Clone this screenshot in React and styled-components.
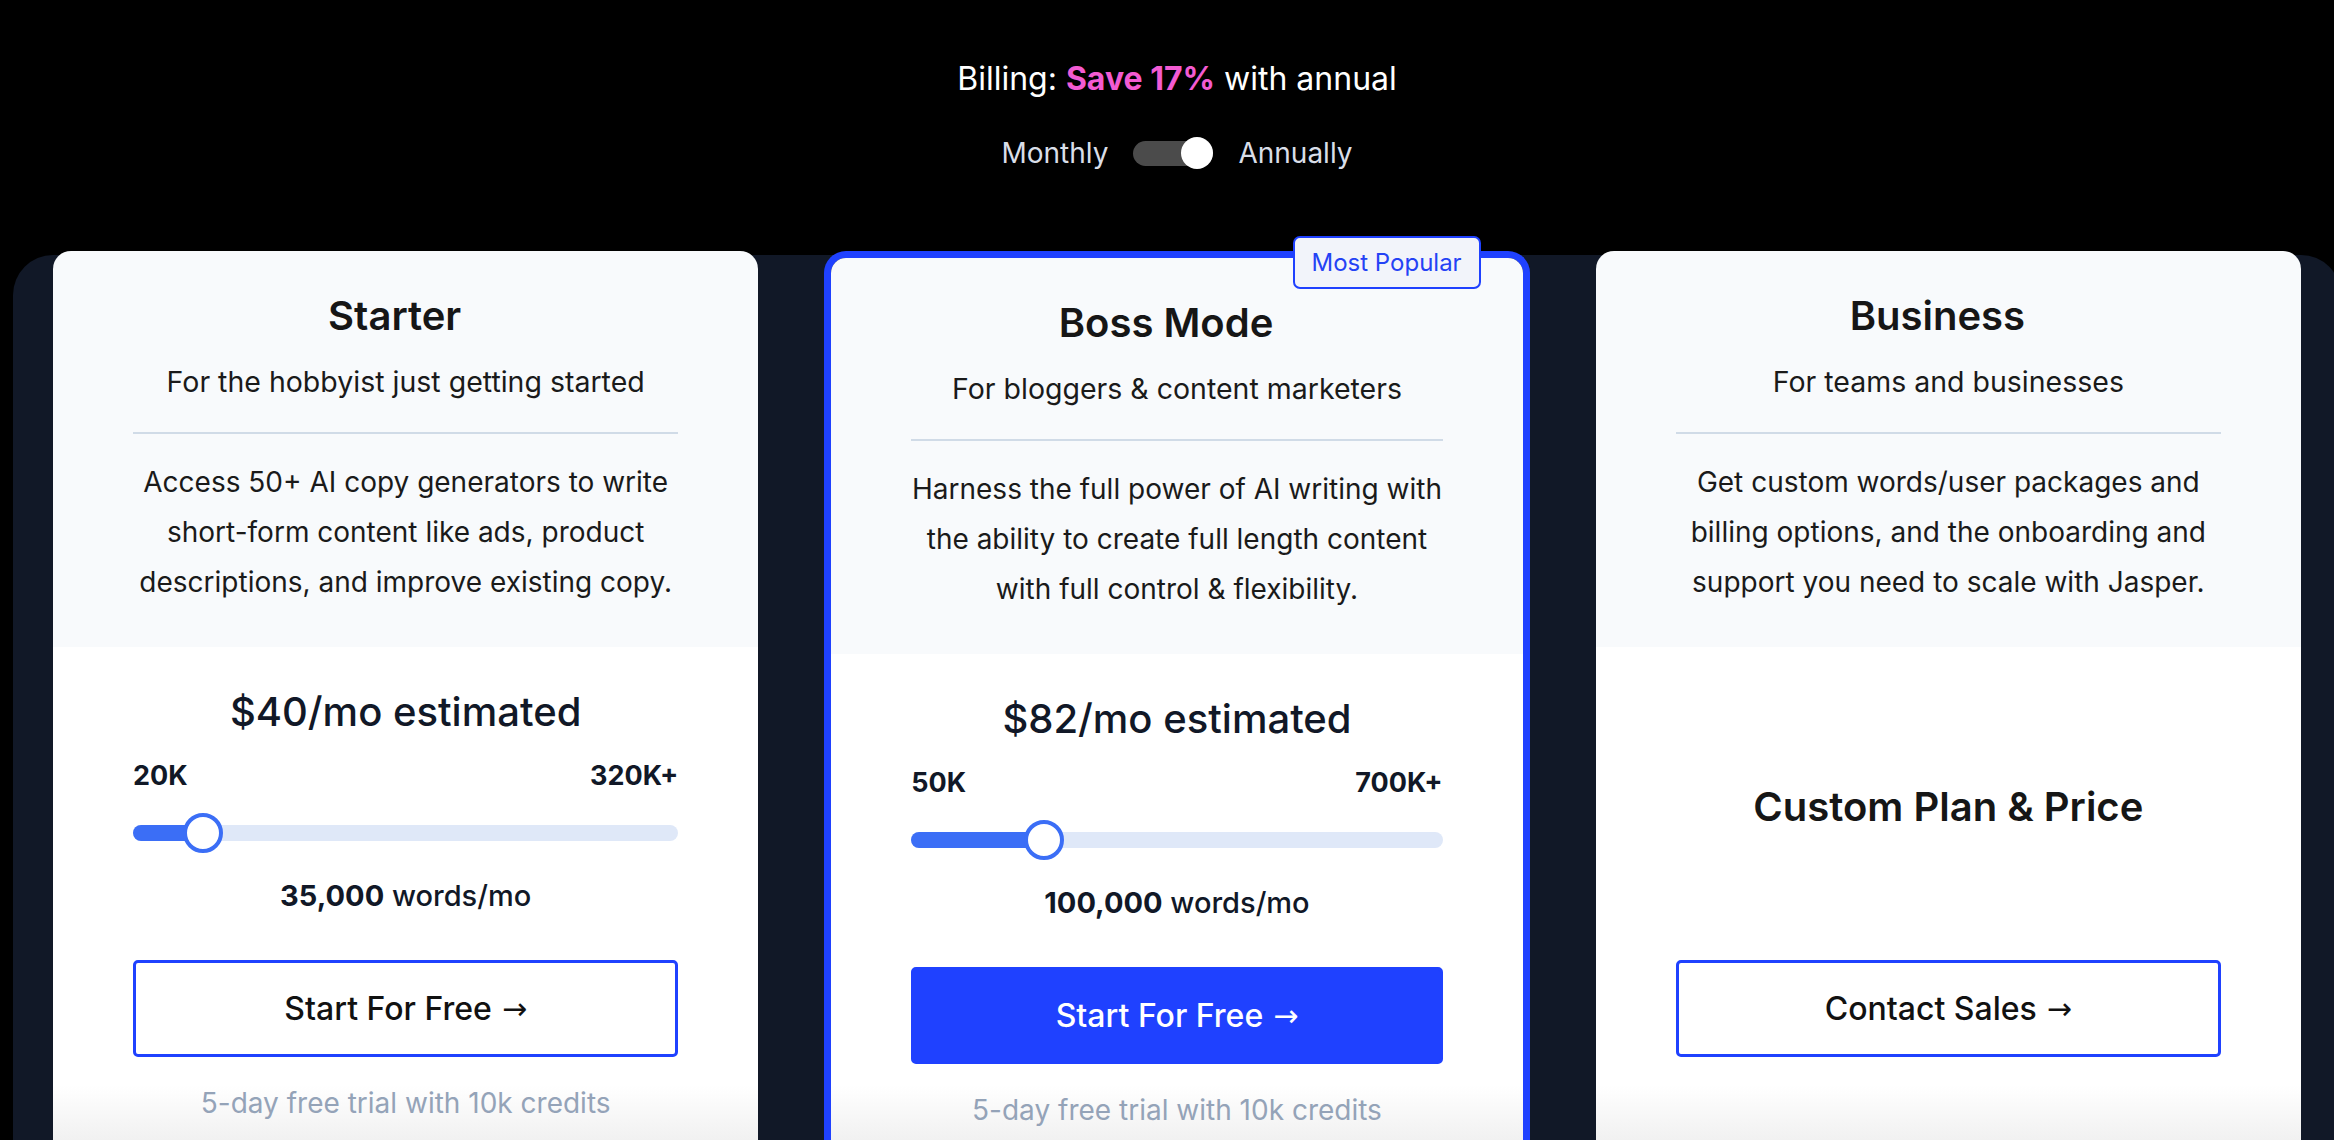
import React from "react";
import styled, { createGlobalStyle, css } from "styled-components";

const GlobalStyle = createGlobalStyle`
  html, body {
    margin: 0;
    padding: 0;
    background: #000;
    overflow: hidden;
  }
  body {
    font-family: Inter, "Noto Sans", "Liberation Sans", sans-serif;
    -webkit-font-smoothing: antialiased;
  }
  * {
    box-sizing: border-box;
  }
`;

const plans = [
  {
    name: "Starter",
    tagline: "For the hobbyist just getting started",
    description:
      "Access 50+ AI copy generators to write short-form content like ads, product descriptions, and improve existing copy.",
    price: "$40/mo estimated",
    min: "20K",
    max: "320K+",
    words: "35,000",
    progress: 12.8,
    cta: "Start For Free",
    trial: "5-day free trial with 10k credits",
  },
  {
    name: "Boss Mode",
    tagline: "For bloggers & content marketers",
    description:
      "Harness the full power of AI writing with the ability to create full length content with full control & flexibility.",
    price: "$82/mo estimated",
    min: "50K",
    max: "700K+",
    words: "100,000",
    progress: 25,
    cta: "Start For Free",
    trial: "5-day free trial with 10k credits",
    featured: true,
  },
  {
    name: "Business",
    tagline: "For teams and businesses",
    description:
      "Get custom words/user packages and billing options, and the onboarding and support you need to scale with Jasper.",
    custom: "Custom Plan & Price",
    cta: "Contact Sales",
  },
];

const App = () => (
  <>
    <GlobalStyle />
    <Page>
      <Header>
        <BillingLine>
          Billing: <Save>Save 17%</Save> with annual
        </BillingLine>
        <ToggleRow>
          <ToggleLabel>Monthly</ToggleLabel>
          <Switch>
            <Knob />
          </Switch>
          <ToggleLabel>Annually</ToggleLabel>
        </ToggleRow>
      </Header>
      <Panel>
        {plans.map((plan) => (
          <PlanCard key={plan.name} plan={plan} />
        ))}
      </Panel>
    </Page>
  </>
);

const PlanCard = ({ plan }) => (
  <Card $featured={plan.featured}>
    {plan.featured && <Badge>Most Popular</Badge>}
    <CardTop $featured={plan.featured}>
      <PlanName>{plan.name}</PlanName>
      <Tagline>{plan.tagline}</Tagline>
      <Divider />
      <Description>{plan.description}</Description>
    </CardTop>
    <CardBottom>
      {plan.custom ? (
        <CustomPlan>{plan.custom}</CustomPlan>
      ) : (
        <>
          <Price>{plan.price}</Price>
          <RangeLabels>
            <span>{plan.min}</span>
            <span>{plan.max}</span>
          </RangeLabels>
          <Slider>
            <Track>
              <Fill style={{ width: `${plan.progress}%` }} />
              <Thumb style={{ left: `${plan.progress}%` }} />
            </Track>
          </Slider>
          <Words>
            <strong>{plan.words}</strong> words/mo
          </Words>
        </>
      )}
      <CtaButton $filled={plan.featured}>
        {plan.cta}
        <Arrow>→</Arrow>
      </CtaButton>
      {plan.trial && <Trial>{plan.trial}</Trial>}
    </CardBottom>
  </Card>
);

export default App;

const Page = styled.div`
  width: 2328px;
  margin-left: 13px;
  height: 100vh;
  display: flex;
  flex-direction: column;
`;

const Header = styled.header`
  display: flex;
  flex-direction: column;
  align-items: center;
  padding-top: 59px;
  margin-bottom: 82px;
`;

const BillingLine = styled.div`
  font-size: 32px;
  line-height: 40px;
  color: #fff;
`;

const Save = styled.span`
  color: #f35bd2;
  font-weight: 700;
`;

const ToggleRow = styled.div`
  margin-top: 34px;
  display: flex;
  align-items: center;
  gap: 25px;
  height: 40px;
`;

const ToggleLabel = styled.span`
  font-size: 28px;
  line-height: 40px;
  color: #d9dee8;
`;

const Switch = styled.div`
  position: relative;
  width: 80px;
  height: 25px;
  border-radius: 13px;
  background: #4b4b4b;
`;

const Knob = styled.span`
  position: absolute;
  right: 0;
  top: 50%;
  width: 32px;
  height: 32px;
  margin-top: -16px;
  border-radius: 50%;
  background: #fff;
`;

const Panel = styled.main`
  flex: 1;
  min-height: 0;
  display: grid;
  grid-template-columns: repeat(3, 1fr);
  column-gap: 66px;
  padding: 0 40px;
  background: #111827;
  border-radius: 40px 40px 0 0;
`;

const Card = styled.section`
  position: relative;
  margin-top: -4px;
  display: flex;
  flex-direction: column;
  border-radius: 18px 18px 0 0;
  ${(p) =>
    p.$featured &&
    css`
      border: 7px solid #1f41ff;
      border-bottom: none;
      border-radius: 22px 22px 0 0;
    `}
`;

const Badge = styled.div`
  position: absolute;
  top: -22px;
  right: 42px;
  z-index: 2;
  height: 53px;
  padding: 0 17px;
  display: flex;
  align-items: center;
  border: 2px solid #1f41ff;
  border-radius: 7px;
  background: #f2f4fa;
  color: #2442f5;
  font-size: 24px;
`;

const CardTop = styled.div`
  padding: 43px 80px 40px;
  text-align: center;
  background: #f8fafc;
  border-radius: ${(p) => (p.$featured ? "15px 15px 0 0" : "18px 18px 0 0")};
`;

const PlanName = styled.h2`
  margin: 0;
  padding-right: 22px;
  font-size: 40px;
  line-height: 44px;
  font-weight: 600;
  color: #161616;
`;

const Tagline = styled.p`
  margin: 24px 0 0;
  font-size: 28.5px;
  line-height: 40px;
  color: #1a1a1a;
`;

const Divider = styled.hr`
  margin: 30px 0 0;
  border: none;
  height: 2px;
  background: #d0dbe7;
`;

const Description = styled.p`
  margin: 23px 0 0;
  font-size: 28px;
  line-height: 50px;
  color: #1a1a1a;
`;

const CardBottom = styled.div`
  flex: 1;
  padding: 40px 80px 0;
  text-align: center;
  background: linear-gradient(180deg, #fff 0, #fff calc(100% - 55px), #f1f1f1 100%);
`;

const Price = styled.div`
  font-size: 40px;
  line-height: 50px;
  font-weight: 500;
  color: #111827;
`;

const RangeLabels = styled.div`
  margin-top: 23px;
  display: flex;
  justify-content: space-between;
  font-size: 27px;
  line-height: 32px;
  font-weight: 700;
  color: #111827;
`;

const Slider = styled.div`
  margin-top: 21px;
  height: 40px;
  display: flex;
  align-items: center;
`;

const Track = styled.div`
  position: relative;
  width: 100%;
  height: 16px;
  border-radius: 8px;
  background: #dfe8f8;
`;

const Fill = styled.div`
  height: 100%;
  border-radius: 8px 0 0 8px;
  background: #3b6ef6;
`;

const Thumb = styled.span`
  position: absolute;
  top: 50%;
  width: 40px;
  height: 40px;
  transform: translate(-50%, -50%);
  border: 4px solid #3b6ef6;
  border-radius: 50%;
  background: #fff;
`;

const Words = styled.div`
  margin-top: 23px;
  font-size: 29px;
  line-height: 40px;
  font-weight: 500;
  color: #111827;
  strong {
    font-weight: 700;
  }
`;

const CustomPlan = styled.div`
  height: 229px;
  padding-top: 95px;
  font-size: 40px;
  line-height: 50px;
  font-weight: 600;
  color: #161616;
`;

const CtaButton = styled.button`
  margin-top: 44px;
  width: 100%;
  height: 97px;
  display: flex;
  align-items: center;
  justify-content: center;
  gap: 10px;
  border: 3px solid #1f41ff;
  border-radius: 5px;
  font-family: inherit;
  font-size: 32px;
  font-weight: 500;
  cursor: pointer;
  background: ${(p) => (p.$filled ? "#1f41ff" : "#fff")};
  color: ${(p) => (p.$filled ? "#fff" : "#111")};
`;

const Arrow = styled.span`
  font-family: "DejaVu Sans", sans-serif;
  font-size: 30px;
  line-height: 1;
  font-weight: 400;
`;

const Trial = styled.p`
  margin: 26px 0 0;
  font-size: 28px;
  line-height: 40px;
  color: #94a3b8;
`;
